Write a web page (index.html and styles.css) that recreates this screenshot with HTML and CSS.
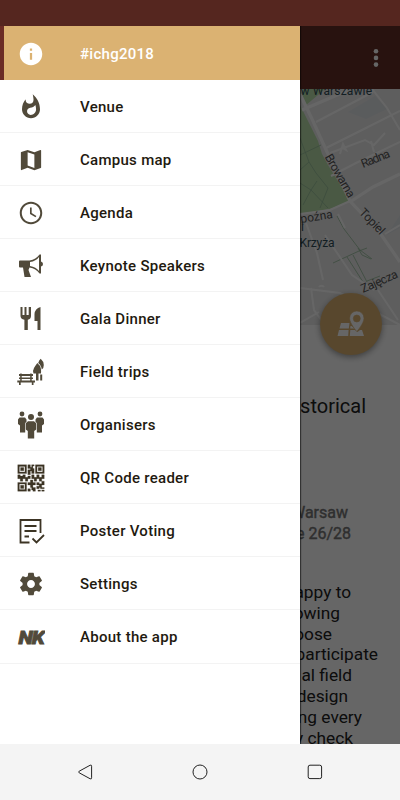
FILE: index.html
```html
<!DOCTYPE html>
<html lang="en">
<head>
    <meta charset="UTF-8">
    <meta name="viewport" content="width=device-width, initial-scale=1.0">
    <title>#ichg2018</title>
    <link rel="stylesheet" href="styles.css">
</head>
<body>
    <div class="status-bar"></div>

    <div class="screen">
        <!-- Page under the drawer -->
        <header class="app-bar">
            <svg class="more" viewBox="0 0 6 20"><circle cx="3" cy="3.2" r="2.3"/><circle cx="3" cy="9.9" r="2.3"/><circle cx="3" cy="16.6" r="2.3"/></svg>
        </header>

        <svg class="map" viewBox="300 89 100 236">
            <rect class="land" x="300" y="89" width="100" height="236"/>
            <path class="block" d="M348 112L375 96L387 109L366 119ZM387 235L400 228V215Z"/>
            <path class="park" d="M303 89H325L305 106L300 97ZM300 105L318 141L322 154L328 165L350 201L330 209L300 214Z"/>
            <path class="path" d="M300 155L321 145M300 170L309 162L316 173L328 188L320 208M303 205L311 190L328 208M300 183L311 190L317 181M309 162L300 138M337 216L344 229L360 250L372 259M333 263L359 251L367 248M347 257L363 282M353 255L367 282M358 248L362 255L371 259M367 281L380 276"/>
            <path class="road wide" d="M300 94L312 119L328 154L350 201L380 233L400 262"/>
            <path class="road wide" d="M302 110L349 90M350 202L373 187L400 174"/>
            <path class="road" d="M316 122L373 92M326 148L362 130L400 111M331 176L356 163L400 142M372 89L387 108L400 130M330 153L365 140L374 145L385 133M371 141L374 152M340 154L343 144L346 150L341 147M300 214L330 210L350 201M338 214L345 228M385 234L400 225M306 223L317 253L323 280M300 288L340 293L400 325M311 288L314 310L325 325M300 323L319 312M319 287A3 3 0 0 1 324 287M325 235L352 275L374 290M378 290L398 320"/>
            <text class="place" x="300.5" y="95" textLength="71.5">w Warszawie</text>
            <text class="place" x="301" y="231">i</text>
            <text class="place" x="299.5" y="246.5" textLength="35">Krzyża</text>
            <text class="street" transform="translate(324.5 157) rotate(60)" textLength="48">Browarna</text>
            <text class="street" transform="translate(363 168) rotate(-22)" textLength="30">Radna</text>
            <text class="street" transform="translate(301 223) rotate(-9)">poźna</text>
            <text class="street" transform="translate(358.5 213) rotate(46)" textLength="31">Topiel</text>
            <text class="street" transform="translate(363 293) rotate(-24)" textLength="39">Zajęcza</text>
        </svg>

        <main class="content">
            <h1 class="title">storical</h1>
            <div class="address">
                <p>Warsaw</p>
                <p>e 26/28</p>
            </div>
            <div class="about">
                <p>appy to</p>
                <p>owing</p>
                <p>oose</p>
                <p>participate</p>
                <p>al field</p>
                <p>design</p>
                <p>ng every</p>
                <p>y check</p>
            </div>
        </main>

        <div class="fab">
            <svg viewBox="0 0 28 28">
                <path d="M4 13H12.5L11.8 18.6H2.5ZM2 20H11.6L11.2 26H0.5ZM13.3 20H18L20.5 22L23 20H25L27 26H12.8ZM13.5 16H14.5L17.5 18.6H13.2Z"/>
                <path class="pin" fill-rule="evenodd" d="M19.8 1A7.2 7.2 0 0 0 12.6 8.2C12.6 13.5 19.8 21.5 19.8 21.5S27 13.5 27 8.2A7.2 7.2 0 0 0 19.8 1ZM19.8 5A3.5 3.5 0 1 1 19.8 12A3.5 3.5 0 0 1 19.8 5Z"/>
            </svg>
        </div>

        <div class="scrim"></div>

        <!-- Navigation drawer -->
        <nav class="drawer">
            <a class="item active">
                <svg viewBox="0 0 24 24"><path d="M12 2C6.48 2 2 6.48 2 12s4.48 10 10 10 10-4.48 10-10S17.52 2 12 2zm1 15h-2v-6h2v6zm0-8h-2V7h2v2z"/></svg>
                <span>#ichg2018</span>
            </a>
            <a class="item">
                <svg viewBox="0 0 24 24"><path d="M13.5.67s.74 2.65.74 4.8c0 2.06-1.35 3.73-3.41 3.73-2.07 0-3.63-1.67-3.63-3.73l.03-.36C5.21 7.51 4 10.62 4 14c0 4.42 3.58 8 8 8s8-3.58 8-8C20 8.61 17.41 3.8 13.5.67zM11.71 19c-1.78 0-3.22-1.4-3.22-3.14 0-1.62 1.05-2.76 2.81-3.12 1.77-.36 3.6-1.21 4.62-2.58.39 1.29.59 2.65.59 4.04 0 2.65-2.15 4.8-4.8 4.8z"/></svg>
                <span>Venue</span>
            </a>
            <a class="item">
                <svg viewBox="0 0 24 24"><path d="M20.5 3l-.16.03L15 5.1 9 3 3.36 4.9c-.21.07-.36.25-.36.48V20.5c0 .28.22.5.5.5l.16-.03L9 18.9l6 2.1 5.64-1.9c.21-.07.36-.25.36-.48V3.5c0-.28-.22-.5-.5-.5zM15 19l-6-2.11V5l6 2.11V19z"/></svg>
                <span>Campus map</span>
            </a>
            <a class="item">
                <svg viewBox="0 0 24 24"><path d="M11.99 2C6.47 2 2 6.48 2 12s4.47 10 9.99 10C17.52 22 22 17.52 22 12S17.52 2 11.99 2zM12 20.2c-4.5 0-8.2-3.7-8.2-8.2S7.5 3.8 12 3.8s8.2 3.7 8.2 8.2-3.7 8.2-8.2 8.2zM12.6 7H11.1v5.9l4.9 2.9.8-1.2-4.2-2.5z"/></svg>
                <span>Agenda</span>
            </a>
            <a class="item">
                <svg viewBox="0 0 28 28"><path fill-rule="evenodd" d="M3 8.5H12.5C17 8 20 5.5 22.5 2.5H24V9.5Q26 10 26 12T24 14.5V21.5H22.5C20 18.5 17 16 12.5 15.5L11.5 18L14 25H7.5L6 15.5H3Q2 15.5 2 14.5V9.5Q2 8.5 3 8.5ZM13 10V14C17 14.5 20 16.5 22 19V5C20 7.8 17 9.5 13 10Z"/></svg>
                <span>Keynote Speakers</span>
            </a>
            <a class="item">
                <svg viewBox="0 0 28 28"><path d="M3.5 2H5.5V10H7.5V2H9.5V10H11.7V2H14V11Q14 14 10.8 14.8V25H7.4V14.8Q3.5 14 3.5 11ZM23.5 2V25H20.5V16H17.5V9Q18 3.5 23.5 2Z"/></svg>
                <span>Gala Dinner</span>
            </a>
            <a class="item">
                <svg viewBox="0 0 28 28"><path d="M2 16H16V18H2ZM2 19.5H16V21H2ZM.3 22.5H18V24.5H16.5V27H14.8V24.5H3.7V27H2V24.5H.3ZM3.2 15.5H4.7V22.5H3.2ZM13.2 15.5H14.7V22.5H13.2ZM20.3 5Q23.3 7.5 23.8 10.3T24 15.5H21.5V22.5H19V15.5H16.5Q15.5 12.5 17 10T20.3 5ZM23.7.8Q26.8 3.5 26.8 7T24.8 11.4L24.2 9Q23 6 21.2 4.9Q22 2.3 23.7.8ZM23.2 16.5H25.2V22.5H23.2Z"/></svg>
                <span>Field trips</span>
            </a>
            <a class="item">
                <svg viewBox="0 0 28 28"><circle cx="5" cy="3" r="2.4"/><circle cx="23" cy="3" r="2.4"/><path d="M2.5 6.5H8L9.5 8.5V11L8.2 12V21.5H3V14.5L1 13V8.5ZM20 6.5H25.5L27 8.5V13L25 14.5V21.5H19.8V12L18.5 11V8.5Z"/><circle cx="14" cy="6" r="3"/><path d="M11 10.2H17L19.2 12.2V18.5L17.2 20V27.5H10.8V20L8.8 18.5V12.2Z"/></svg>
                <span>Organisers</span>
            </a>
            <a class="item">
                <svg class="qr" viewBox="-.6 -.6 22.2 22.2"><path fill-rule="evenodd" d="M0 0H7V7H0ZM1.3 1.3V5.7H5.7V1.3ZM14 0H21V7H14ZM15.3 1.3V5.7H19.7V1.3ZM0 14H7V21H0ZM1.3 15.3V19.7H5.7V15.3ZM2.2 2.2H4.8V4.8H2.2ZM16.2 2.2H18.8V4.8H16.2ZM2.2 16.2H4.8V18.8H2.2ZM8 0H10V2H8ZM11 0H13V1H12V3H13V7H11V5H10V8H8V4H10V3H8V2H11ZM0 8H2V9H4V8H6V10H8V9H10V11H8V13H6V11H4V13H2V11H0ZM11 8H13V10H15V8H17V10H19V8H21V11H19V13H17V11H15V13H13V11H11ZM8 14H10V12H12V14H14V16H12V18H10V16H8ZM15 14H17V15H19V13H21V16H19V18H17V16H15ZM8 19H10V21H8ZM11 18H14V21H12V20H11ZM15 17H17V19H15ZM18 18H21V19H18ZM16 20H18V21H16ZM19 20H21V21H19Z"/></svg>
                <span>QR Code reader</span>
            </a>
            <a class="item">
                <svg class="line" viewBox="0 0 28 28"><path d="M12.5 25.5H3.5V3H23.5V16M7.5 9H19.5M7.5 14H19.5M7.5 19.5H12M15.5 21.5L19.5 25.5L27 18"/></svg>
                <span>Poster Voting</span>
            </a>
            <a class="item">
                <svg viewBox="0 0 24 24"><path d="M19.43 12.98c.04-.32.07-.64.07-.98s-.03-.66-.07-.98l2.11-1.65c.19-.15.24-.42.12-.64l-2-3.46c-.12-.22-.39-.3-.61-.22l-2.49 1c-.52-.4-1.08-.73-1.69-.98l-.38-2.65C14.46 2.18 14.25 2 14 2h-4c-.25 0-.46.18-.49.42l-.38 2.65c-.61.25-1.17.59-1.69.98l-2.49-1c-.23-.09-.49 0-.61.22l-2 3.46c-.13.22-.07.49.12.64l2.11 1.65c-.04.32-.07.65-.07.98s.03.66.07.98l-2.11 1.65c-.19.15-.24.42-.12.64l2 3.46c.12.22.39.3.61.22l2.49-1c.52.4 1.08.73 1.69.98l.38 2.65c.03.24.24.42.49.42h4c.25 0 .46-.18.49-.42l.38-2.65c.61-.25 1.17-.59 1.69-.98l2.49 1c.23.09.49 0 .61-.22l2-3.46c.12-.22.07-.49-.12-.64l-2.11-1.65zM12 15.5c-1.93 0-3.5-1.57-3.5-3.5s1.57-3.5 3.5-3.5 3.5 1.57 3.5 3.5-1.57 3.5-3.5 3.5z"/></svg>
                <span>Settings</span>
            </a>
            <a class="item">
                <svg viewBox="0 0 28 28"><text class="logo" x="1.5" y="21" textLength="25" lengthAdjust="spacingAndGlyphs">NK</text></svg>
                <span>About the app</span>
            </a>
        </nav>
    </div>

    <!-- Android buttons -->
    <footer class="nav-bar">
        <svg viewBox="0 0 16 16"><path d="M13.2 1.2L2.2 7.2Q1 8 2.2 8.8L13.2 14.8Q14.6 15.3 14.6 13.8V2.2Q14.6.7 13.2 1.2Z"/></svg>
        <svg viewBox="0 0 16 16"><circle cx="8" cy="8" r="7"/></svg>
        <svg viewBox="0 0 16 16"><rect x="1.2" y="1.2" width="13.4" height="13.4" rx="1.8"/></svg>
    </footer>
</body>
</html>
```

FILE: styles.css
```css
* {
    box-sizing: border-box;
}

body {
    margin: 0;
    width: 400px;
    height: 800px;
    display: flex;
    flex-direction: column;
    overflow: hidden;
    font-family: Roboto, sans-serif;
    background: #fff;
}

h1,
p {
    margin: 0;
}

.status-bar {
    height: 26px;
    flex: none;
    background: #55261f;
}

/* Page under the drawer */
.screen {
    position: relative;
    flex: 1;
    min-height: 0;
    display: flex;
    flex-direction: column;
    overflow: hidden;
    background: #fff;
}

.app-bar {
    height: 63px;
    flex: none;
    display: flex;
    justify-content: flex-end;
    padding: 22px 21.5px 0 0;
    background: #642f26;
}

.more {
    width: 6px;
    height: 20px;
    fill: #fff;
}

.map {
    width: 100px;
    height: 236px;
    flex: none;
    align-self: flex-end;
}

.land {
    fill: #ebebeb;
}

.block {
    fill: #e2e5e9;
}

.park {
    fill: #b9dfaa;
}

.path {
    fill: none;
    stroke: #96bd9b;
    stroke-width: 0.8;
}

.road {
    fill: none;
    stroke: #fff;
    stroke-width: 2;
}

.road.wide {
    stroke-width: 3.2;
}

.place {
    font-size: 12px;
    fill: #2f4d57;
}

.street {
    font-size: 12px;
    fill: #555;
}

.content {
    text-align: right;
    color: #212121;
}

.title {
    margin: 69px 34px 0 0;
    font-size: 20px;
    line-height: 24px;
    font-weight: 400;
}

.address {
    margin-top: 84px;
    font-size: 16px;
    line-height: 21px;
    color: #757575;
    -webkit-text-stroke: 0.4px #757575;
}

.address p:nth-child(1) { padding-right: 52px; }
.address p:nth-child(2) { padding-right: 49px; }

.about {
    margin-top: 38px;
    font-size: 17.3px;
    line-height: 20.8px;
}

.about p:nth-child(1) { padding-right: 49px; }
.about p:nth-child(2) { padding-right: 60px; }
.about p:nth-child(3) { padding-right: 68px; }
.about p:nth-child(4) { padding-right: 22px; }
.about p:nth-child(5) { padding-right: 48px; }
.about p:nth-child(6) { padding-right: 52px; }
.about p:nth-child(7) { padding-right: 38px; }
.about p:nth-child(8) { padding-right: 47px; }

.fab {
    position: absolute;
    right: 18px;
    top: 267px;
    width: 62px;
    height: 62px;
    display: flex;
    align-items: center;
    justify-content: center;
    border-radius: 50%;
    background: #dbb272;
    box-shadow: 0 2px 6px rgba(0, 0, 0, 0.4);
}

.fab svg {
    width: 28px;
    height: 28px;
    fill: #fff;
}

.fab .pin {
    stroke: #dbb272;
    stroke-width: 0.6;
}

.scrim {
    position: absolute;
    inset: 0;
    background: rgba(0, 0, 0, 0.6);
}

/* Drawer */
.drawer {
    position: absolute;
    left: 0;
    top: 0;
    bottom: 0;
    width: 300px;
    background: #fff;
    box-shadow: 1px 0 1px rgba(0, 0, 0, 0.5);
}

.item {
    display: flex;
    align-items: center;
    height: 53.05px;
    padding: 2px 0 0 17px;
    border-bottom: 1px solid #f3f3f3;
    font-size: 15px;
    font-weight: 500;
    letter-spacing: 0.28px;
    color: #1f1a10;
}

.item svg {
    width: 28px;
    height: 28px;
    margin-right: 35px;
    fill: #514a3a;
}

.item svg[viewBox="0 0 24 24"] {
    padding: 0.5px;
}

.item.active {
    height: 54px;
    padding-left: 13px;
    border-left: 4px solid #6b2c25;
    border-bottom: 0;
    background: #dbb272;
    color: #fff;
}

.item.active svg {
    fill: #fff;
}

.item .line {
    fill: none;
    stroke: #3c3424;
    stroke-width: 1.8;
}

.item .qr {
    fill: #3c3424;
    stroke: #3c3424;
    stroke-width: 0.2;
}

.logo {
    font-size: 18.5px;
    font-weight: 900;
    font-style: italic;
    letter-spacing: -1px;
    stroke: #514a3a;
    stroke-width: 0.8;
}

/* Android buttons */
.nav-bar {
    height: 56px;
    flex: none;
    display: flex;
    justify-content: space-between;
    align-items: center;
    padding: 0 77px;
    background: #f4f4f4;
}

.nav-bar svg {
    width: 16px;
    height: 16px;
    fill: none;
    stroke: #222;
    stroke-width: 1;
}
```
